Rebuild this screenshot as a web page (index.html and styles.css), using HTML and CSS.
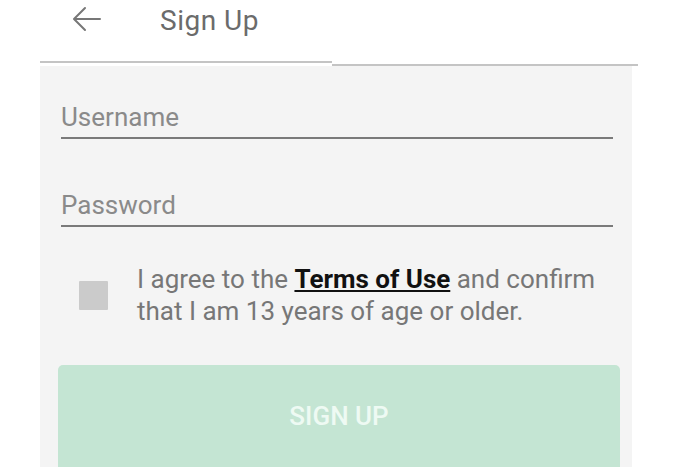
FILE: index.html
```html
<!DOCTYPE html>
<html>
<head>
<meta charset="utf-8">
<link rel="stylesheet" href="styles.css">
</head>
<body>
<header class="topbar">
  <svg class="back" width="30" height="26" viewBox="0 0 30 26">
    <path d="M28 13H3M13 2L2 13l11 11" fill="none" stroke="#777" stroke-width="2" stroke-linecap="round" stroke-linejoin="round"/>
  </svg>
  <h1 class="title">Sign Up</h1>
</header>
<div class="dividers">
  <div class="div-left"></div>
  <div class="div-right"></div>
</div>
<main class="panel">
  <div class="field">Username</div>
  <div class="field field-2">Password</div>
  <div class="agree">
    <span class="box"></span>
    <p class="agree-text">I agree to the <a class="terms">Terms of Use</a> and confirm that I am 13 years of age or older.</p>
  </div>
  <button class="signup">SIGN UP</button>
</main>
</body>
</html>
```
FILE: styles.css
```css
html, body {
  margin: 0;
  padding: 0;
  background: #fff;
  font-family: Roboto, "Noto Sans", sans-serif;
  overflow: hidden;
  height: 467px;
}
.topbar {
  display: flex;
  align-items: center;
  height: 40px;
  padding-left: 72px;
}
.back {
  display: block;
  margin-top: -2px;
}
.title {
  margin: 0 0 0 58px;
  font-weight: 400;
  font-size: 28px;
  color: #6b6b6b;
  letter-spacing: 0.5px;
}
.dividers {
  display: flex;
  align-items: flex-start;
  margin: 21px 0 0 40px;
  height: 5px;
}
.div-left {
  width: 292px;
  height: 2px;
  background: #c4c4c4;
}
.div-right {
  width: 306px;
  height: 2px;
  margin-top: 3px;
  background: #c4c4c4;
}
.panel {
  margin-left: 40px;
  width: 592px;
  height: 401px;
  background: #f4f4f4;
  padding-top: 37px;
  box-sizing: border-box;
}
.field {
  margin: 0 19px 0 21px;
  font-size: 26px;
  color: #8a8a8a;
  line-height: 28px;
  padding-bottom: 6px;
  border-bottom: 2px solid #7a7a7a;
}
.field-2 {
  margin-top: 52px;
}
.agree {
  display: flex;
  align-items: center;
  margin: 36px 0 0 39px;
}
.box {
  flex: none;
  width: 29px;
  height: 29px;
  background: #cbcbcb;
  border-radius: 1px;
}
.agree-text {
  margin: 0 0 0 29px;
  font-size: 26px;
  line-height: 32px;
  color: #777;
}
.terms {
  font-weight: 700;
  color: #111;
  text-decoration: underline;
  text-underline-offset: 2px;
}
.signup {
  display: block;
  margin: 38px 0 0 18px;
  width: 562px;
  height: 110px;
  border: none;
  border-radius: 5px;
  background: #c4e5d3;
  color: #eefaf3;
  font-family: Roboto, sans-serif;
  font-weight: 500;
  font-size: 26px;
  padding: 0 0 8px;
}
```
